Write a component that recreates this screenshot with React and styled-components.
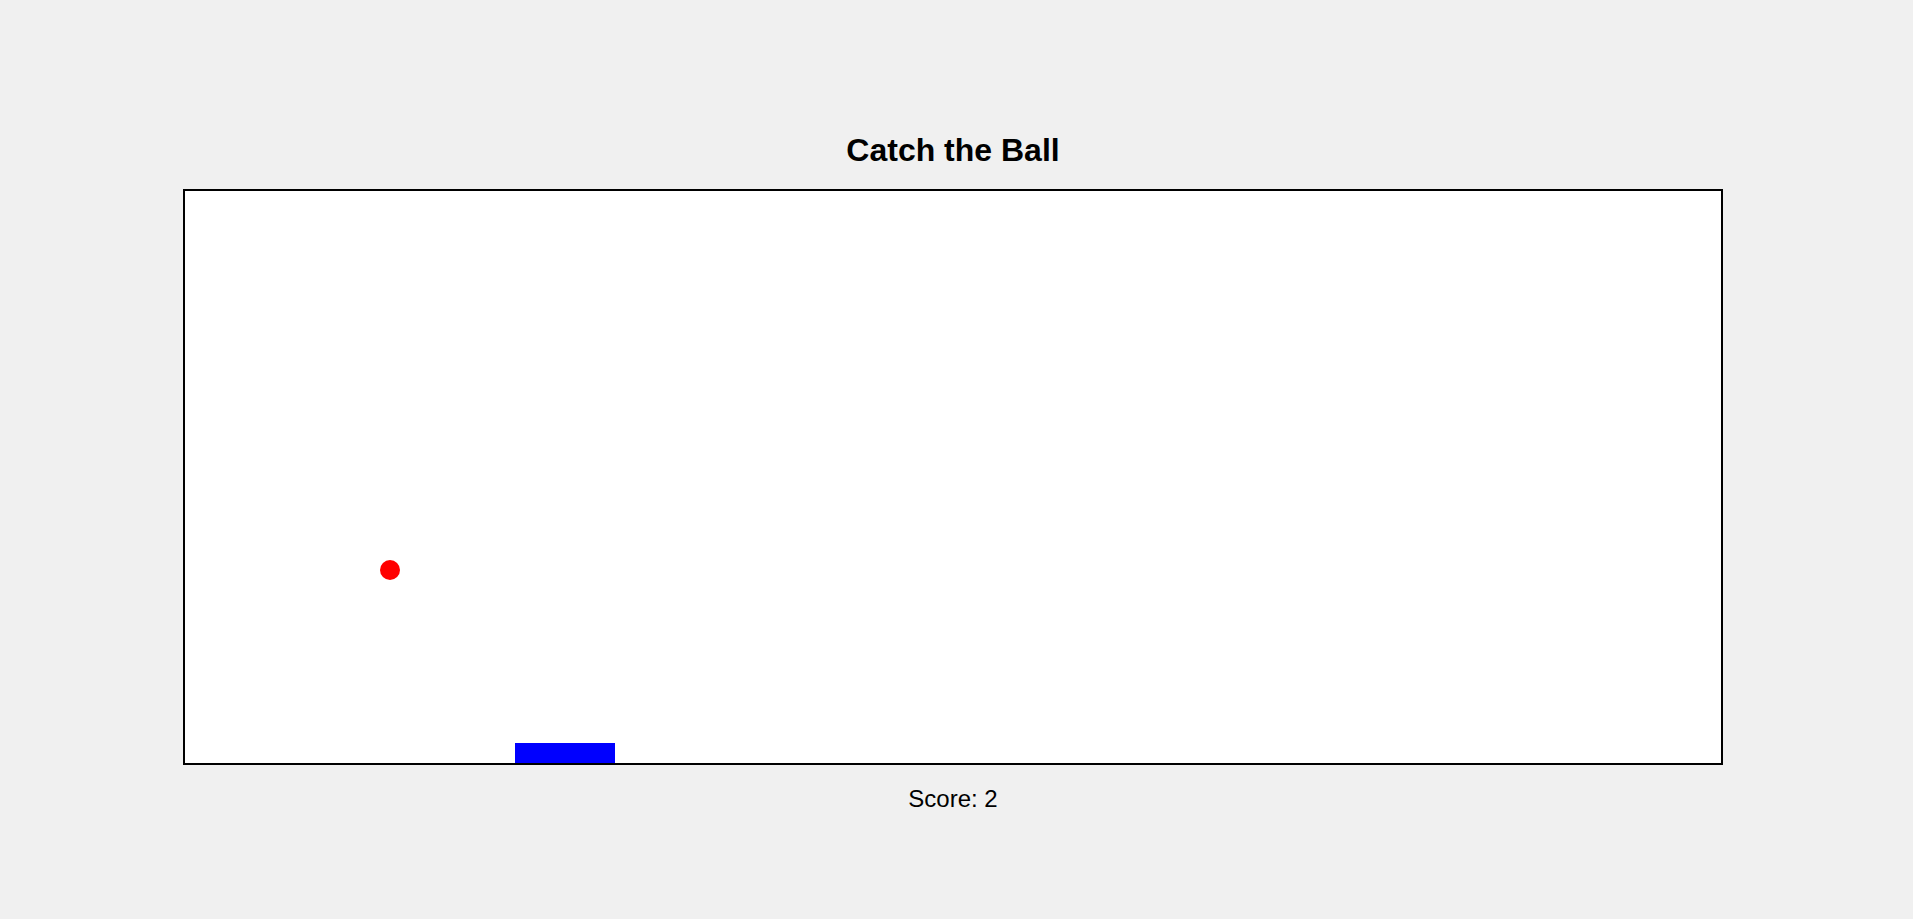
import React, { useState } from "react"
import styled, { createGlobalStyle } from "styled-components"

const GlobalStyle = createGlobalStyle`
  body {
    margin: 0;
    background: #f0f0f0;
    font-family: "Liberation Sans", Arial, sans-serif;
  }
`

const App = () => {
  // snapshot of the game state
  const [ball] = useState({ x: 205, y: 379, r: 10 })
  const [paddle] = useState({ x: 330, w: 100, h: 20 })
  const [score] = useState(2)

  return (
    <Page>
      <GlobalStyle />
      <Title>Catch the Ball</Title>
      <Board>
        <Ball style={{ left: ball.x - ball.r, top: ball.y - ball.r }} size={ball.r * 2} />
        <Paddle style={{ left: paddle.x }} w={paddle.w} h={paddle.h} />
      </Board>
      <Score>Score: {score}</Score>
    </Page>
  )
}

export default App

const Page = styled.div`
  display: flex;
  flex-direction: column;
  align-items: center;
  padding: 132px 7px 0 0;
  min-height: 100vh;
  box-sizing: border-box;
`

const Title = styled.h1`
  margin: 0 0 20px;
  font-size: 32px;
  line-height: 37px;
  font-weight: bold;
  color: #000;
`

const Board = styled.div`
  position: relative;
  width: 1536px;
  height: 572px;
  background: #fff;
  border: 2px solid #000;
  overflow: hidden;
`

const Ball = styled.div`
  position: absolute;
  width: ${p => p.size}px;
  height: ${p => p.size}px;
  border-radius: 50%;
  background: #ff0000;
`

const Paddle = styled.div`
  position: absolute;
  bottom: 0;
  width: ${p => p.w}px;
  height: ${p => p.h}px;
  background: #0000ff;
`

const Score = styled.p`
  margin: 20px 0 0;
  font-size: 24px;
  line-height: 28px;
  color: #000;
`
